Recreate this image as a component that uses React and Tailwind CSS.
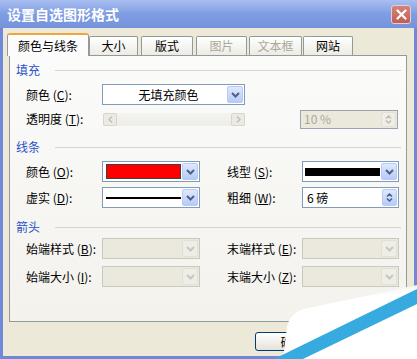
import React from "react";

const F = "font-['Noto_Sans_CJK_SC','Noto_Sans',sans-serif]";

function Chevron({ up, color }) {
  return (
    <svg width="9" height="6" viewBox="0 0 9 6">
      <path d={up ? "M1 5L4.5 1.5L8 5" : "M1 1L4.5 4.5L8 1"} fill="none" stroke={color} strokeWidth="2" />
    </svg>
  );
}

function DropBtn({ disabled }) {
  return (
    <div
      className={
        disabled
          ? "w-[16px] h-full flex items-center justify-center rounded-[2px] border border-[#e2e0d6] bg-[#eeede6]"
          : "w-[16px] h-full flex items-center justify-center rounded-[2px] border border-[#b9c9f3] bg-gradient-to-b from-[#dfe8fe] to-[#b7cbf8]"
      }
    >
      <Chevron color={disabled ? "#c9c7bc" : "#4d6185"} />
    </div>
  );
}

function SpinBtn({ disabled }) {
  return (
    <div
      className={
        disabled
          ? "w-[15px] h-full flex flex-col items-center justify-center gap-[1px] rounded-[2px] border border-[#e2e0d6] bg-[#eeede6]"
          : "w-[15px] h-full flex flex-col items-center justify-center gap-[1px] rounded-[2px] border border-[#b9c9f3] bg-gradient-to-b from-[#dfe8fe] to-[#b7cbf8]"
      }
    >
      <svg width="7" height="4" viewBox="0 0 7 4">
        <path d="M1 3.5L3.5 1L6 3.5" fill="none" stroke={disabled ? "#c0beb3" : "#4d6185"} strokeWidth="1.5" />
      </svg>
      <svg width="7" height="4" viewBox="0 0 7 4">
        <path d="M1 0.5L3.5 3L6 0.5" fill="none" stroke={disabled ? "#c0beb3" : "#4d6185"} strokeWidth="1.5" />
      </svg>
    </div>
  );
}

function Combo({ className, disabled, children }) {
  return (
    <div
      className={
        (disabled
          ? "h-[21px] border border-[#cbc9bc] bg-[#ebe9de] p-[1px] flex "
          : "h-[21px] border border-[#7f9db9] bg-white p-[1px] flex ") + className
      }
    >
      <div className="flex-1 flex items-center min-w-0">{children}</div>
      <DropBtn disabled={disabled} />
    </div>
  );
}

function Label({ className, children }) {
  return <div className={"text-[12px] leading-[14px] text-black whitespace-pre " + className}>{children}</div>;
}

function Header({ children }) {
  return (
    <div className="h-[14px] flex items-center pl-[6px] pr-[5px]">
      <span className="text-[12px] leading-[14px] text-[#2a52c9]">{children}</span>
      <div className="flex-1 h-px bg-[#d8d6cc] ml-[15px]" />
    </div>
  );
}

function Tab({ className, active, disabled, children }) {
  if (active) {
    return (
      <div
        className={
          "h-[23px] flex items-center justify-center rounded-t-[3px] border border-b-0 border-[#919b9c] border-t-2 border-t-[#f0a63a] bg-[#fcfcfc] text-[12px] text-black " +
          className
        }
      >
        {children}
      </div>
    );
  }
  return (
    <div
      className={
        "h-[19px] mb-[1px] flex items-center justify-center rounded-t-[2px] border border-b-0 border-[#919b9c] bg-gradient-to-b from-white to-[#ecebe4] text-[12px] " +
        (disabled ? "text-[#aca899] " : "text-black ") +
        className
      }
    >
      {children}
    </div>
  );
}

export default function App() {
  return (
    <div className={"relative w-[417px] h-[359px] overflow-hidden bg-[#7088d8] flex flex-col " + F}>
      {/* Title bar */}
      <div className="h-[28px] flex items-center justify-between pl-[7px] pr-[6px] bg-gradient-to-b from-[#a9bff2] via-[#7f9de2] to-[#7593db]">
        <span className="text-white font-bold text-[14px] tracking-[0px]">设置自选图形格式</span>
        <div className="w-[20px] h-[19px] rounded-[3px] border border-[#e9cdc8] bg-gradient-to-b from-[#d4837a] to-[#bf5e55] flex items-center justify-center">
          <svg width="11" height="11" viewBox="0 0 11 11">
            <path d="M1.5 1.5L9.5 9.5M9.5 1.5L1.5 9.5" stroke="white" strokeWidth="2.2" strokeLinecap="round" />
          </svg>
        </div>
      </div>

      {/* Body */}
      <div className="flex-1 mx-[3px] mb-[3px] bg-[#ece9d8] pt-[5px] flex flex-col">
        {/* Tabs */}
        <div className="relative z-10 -mb-px flex items-end pl-[4px]">
          <Tab active className="w-[82px]">颜色与线条</Tab>
          <Tab className="w-[49px]">大小</Tab>
          <Tab className="w-[52px] ml-[3px]">版式</Tab>
          <Tab disabled className="w-[51px] ml-[3px]">图片</Tab>
          <Tab disabled className="w-[53px] ml-[2px]">文本框</Tab>
          <Tab className="w-[50px] ml-[1px]">网站</Tab>
        </div>

        {/* Panel */}
        <div className="ml-[6px] w-[398px] h-[267px] border border-[#919b9c] bg-gradient-to-b from-[#fbfbfa] to-[#f3f2ed] flex flex-col">
          <div className="mt-[7px]">
            <Header>填充</Header>
          </div>
          {/* row 1 */}
          <div className="mt-[7px] flex items-center pl-[16px]">
            <Label className="w-[76px]">颜色 (<u>C</u>):</Label>
            <Combo className="w-[143px]">
              <span className="w-full text-center text-[12px] text-black pl-[6px]">无填充颜色</span>
            </Combo>
          </div>
          {/* row 2 */}
          <div className="mt-[4px] h-[20px] flex items-center pl-[16px]">
            <Label className="w-[77px]">透明度 (<u>T</u>):</Label>
            <div className="w-[142px] h-[13px] flex bg-gradient-to-b from-[#f4f4f0] to-[#eeede6]">
              <div className="w-[14px] h-full rounded-[2px] border border-[#d8d6cb] bg-[#ebeae3] flex items-center justify-center">
                <svg width="5" height="7" viewBox="0 0 5 7">
                  <path d="M4 0.5L1 3.5L4 6.5" fill="none" stroke="#c4c2b6" strokeWidth="1.5" />
                </svg>
              </div>
              <div className="flex-1" />
              <div className="w-[14px] h-full rounded-[2px] border border-[#d8d6cb] bg-[#ebeae3] flex items-center justify-center">
                <svg width="5" height="7" viewBox="0 0 5 7">
                  <path d="M1 0.5L4 3.5L1 6.5" fill="none" stroke="#c4c2b6" strokeWidth="1.5" />
                </svg>
              </div>
            </div>
            <div className="ml-[55px] w-[98px] h-[19px] border border-[#9aa5b4] bg-[#ebe9dc] p-[1px] flex">
              <div className="flex-1 flex items-center pl-[2px] text-[12px] text-[#aca899]">10 %</div>
              <SpinBtn disabled />
            </div>
          </div>

          <div className="mt-[11px]">
            <Header>线条</Header>
          </div>
          {/* row 3 */}
          <div className="mt-[7px] flex items-center pl-[16px]">
            <Label className="w-[76px]">颜色 (<u>O</u>):</Label>
            <Combo className="w-[98px]">
              <div className="ml-[2px] mr-[1px] flex-1 h-[15px] bg-[#ff0000] border border-[#404040]" />
            </Combo>
            <Label className="w-[75px] ml-[27px]">线型 (<u>S</u>):</Label>
            <Combo className="w-[97px]">
              <div className="ml-[1px] mr-[1px] flex-1 h-[8px] bg-black" />
            </Combo>
          </div>
          {/* row 4 */}
          <div className="mt-[5px] flex items-center pl-[16px]">
            <Label className="w-[76px]">虚实 (<u>D</u>):</Label>
            <Combo className="w-[98px]">
              <div className="ml-[2px] mr-[1px] flex-1 h-[2px] bg-black" />
            </Combo>
            <Label className="w-[75px] ml-[27px]">粗细 (<u>W</u>):</Label>
            <div className="w-[97px] h-[21px] border border-[#7f9db9] bg-white p-[1px] flex">
              <div className="flex-1 flex items-center pl-[3px] text-[12px] text-black">6 磅</div>
              <SpinBtn />
            </div>
          </div>

          <div className="mt-[12px]">
            <Header>箭头</Header>
          </div>
          {/* row 5 */}
          <div className="mt-[4px] flex items-center pl-[16px]">
            <Label className="w-[76px]">始端样式 (<u>B</u>):</Label>
            <Combo disabled className="w-[98px]" />
            <Label className="w-[75px] ml-[27px]">末端样式 (<u>E</u>):</Label>
            <Combo disabled className="w-[97px]" />
          </div>
          {/* row 6 */}
          <div className="mt-[7px] flex items-center pl-[16px]">
            <Label className="w-[76px]">始端大小 (<u>I</u>):</Label>
            <Combo disabled className="w-[98px]" />
            <Label className="w-[75px] ml-[27px]">末端大小 (<u>Z</u>):</Label>
            <Combo disabled className="w-[97px]" />
          </div>
        </div>

        {/* Buttons */}
        <div className="mt-[10px] flex pl-[252px] gap-[6px]">
          <div className="w-[75px] h-[19px] rounded-[3px] border border-[#003c74] bg-gradient-to-b from-white to-[#e3e2da] flex items-center justify-center text-[12px] text-black">
            确定
          </div>
          <div className="w-[75px] h-[19px] rounded-[3px] border border-[#003c74] bg-gradient-to-b from-white to-[#e3e2da] flex items-center justify-center text-[12px] text-black">
            取消
          </div>
        </div>
      </div>

      {/* Watermark overlay (page curl) */}
      <svg className="absolute inset-0 pointer-events-none" width="417" height="359" viewBox="0 0 417 359">
        <defs>
          <linearGradient id="curl" x1="0" y1="0" x2="0.15" y2="1">
            <stop offset="0" stopColor="#e4e4e0" />
            <stop offset="0.25" stopColor="#ffffff" />
            <stop offset="1" stopColor="#ffffff" />
          </linearGradient>
        </defs>
        <path d="M417 285 L304 309 Q290 313 287 327 L283 359 L417 359 Z" fill="url(#curl)" />
        <path d="M417 289 L417 304 L303 359 L274 359 Z" fill="#37abdf" />
      </svg>
    </div>
  );
}
